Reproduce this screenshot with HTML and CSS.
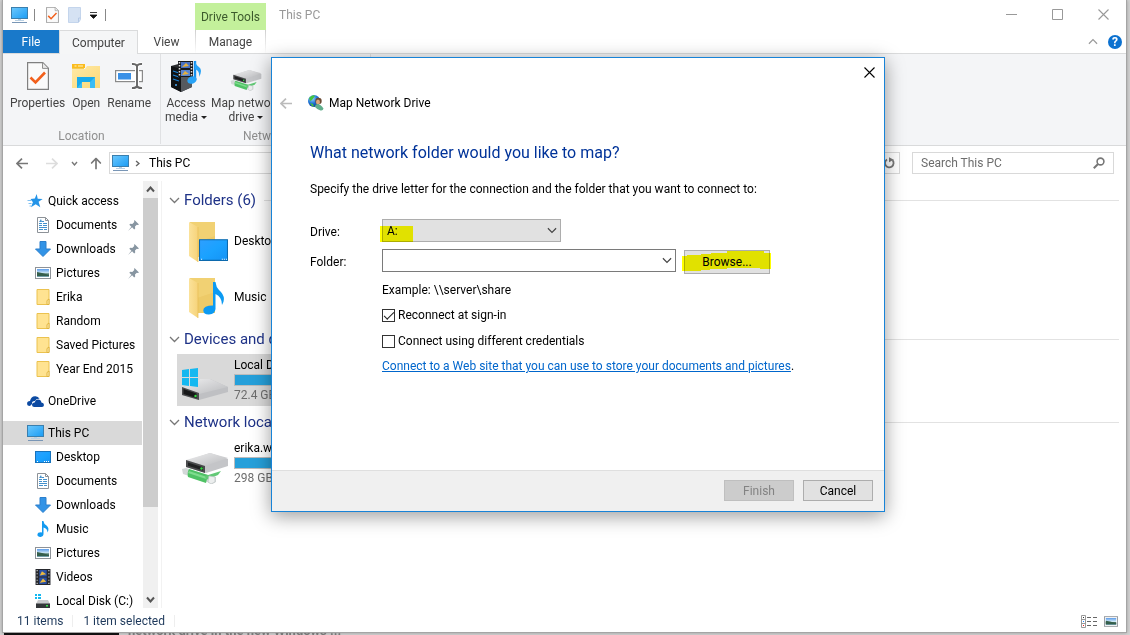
FILE: index.html
```html
<!DOCTYPE html>
<html lang="en">
<head>
<meta charset="utf-8">
<title>This PC</title>
<link rel="stylesheet" href="styles.css">
</head>
<body>
<svg class="sprite" aria-hidden="true">
  <defs>
    <linearGradient id="blue" x1="0" y1="0" x2="1" y2="1"><stop offset="0" stop-color="#6cc8fd"/><stop offset="1" stop-color="#1a9cf4"/></linearGradient>
    <linearGradient id="screen" x1="0" y1="0" x2="1" y2="1"><stop offset="0" stop-color="#2f9fff"/><stop offset=".5" stop-color="#1aa2ff"/><stop offset="1" stop-color="#1493f5"/></linearGradient>
    <linearGradient id="paper" x1="0" y1="0" x2="1" y2="1"><stop offset="0" stop-color="#ffe9a6"/><stop offset="1" stop-color="#fcd978"/></linearGradient>
    <linearGradient id="fold" x1="0" y1="0" x2="1" y2="0"><stop offset="0" stop-color="#fbe29a"/><stop offset="1" stop-color="#f6d37a"/></linearGradient>
    <linearGradient id="metal" x1="0" y1="0" x2="1" y2="1"><stop offset="0" stop-color="#eeeeef"/><stop offset="1" stop-color="#b9babd"/></linearGradient>
    <linearGradient id="sky" x1="0" y1="0" x2="0" y2="1"><stop offset="0" stop-color="#5b9bea"/><stop offset=".5" stop-color="#cfe8f5"/><stop offset=".6" stop-color="#47705f"/><stop offset="1" stop-color="#7ba7b8"/></linearGradient>
    <radialGradient id="ball" cx=".35" cy=".3" r=".8"><stop offset="0" stop-color="#9fd6ff"/><stop offset=".5" stop-color="#1f75d6"/><stop offset="1" stop-color="#0a2c80"/></radialGradient>
  </defs>
  <symbol id="pc" viewBox="0 0 17 16"><rect x=".5" y=".5" width="16" height="11" fill="url(#blue)" stroke="#3a7fae"/><path d="M7 12h3v1H7z" fill="#b8cfe0"/><path d="M4 13.5h9" stroke="#b9d0e3"/><path d="M1 15.5h15" stroke="#7996b6"/></symbol>
  <symbol id="propsheet" viewBox="0 0 22 28"><path d="M.6.6h15.2l5.6 5.6v21.2H.6z" fill="#fafafa" stroke="#808080" stroke-width="1.2"/><path d="M15.5.8v5.6h5.6" fill="#e8e8e8" stroke="#909090"/><path d="M3.500 15.500l5 5 9.500-10" fill="none" stroke="#f2601c" stroke-width="2.600"/></symbol>
  <symbol id="blankdoc" viewBox="0 0 13 16"><path d="M.5.5h12v12l-2 3H.5z" fill="#d5e2f3" stroke="#c4d5ec"/><path d="M10.500 15v-4h2" fill="none" stroke="#b5c9e6"/></symbol>
  <symbol id="openfolder" viewBox="0 0 28 24"><path d="M0 1h12v4h16v19H0z" fill="#f3cb55"/><path d="M0 0h13v4H0z" fill="#fbbc1e"/><path d="M2.500 1.500h2v1h-2zM6 1.500h5v1H6z" fill="#fff3c4"/><path d="M0 5h13l2-3h13v22H0z" fill="url(#paper)"/><path d="M5 24V13h18v11h-5v-6h-8v6z" fill="#3bbcf5"/><path d="M5 13h18l-5 5h-8l-5 6z" fill="#19aaeb"/></symbol>
  <symbol id="rename" viewBox="0 0 28 26"><rect x=".6" y="7.600" width="26.800" height="11" fill="#fff" stroke="#8a8a8a" stroke-width="1.200"/><rect x="3" y="10" width="13" height="6.500" fill="#3a90e6"/><path d="M22 2v22M17 1q4-.5 5 2 1-2.500 5-2M17 25q4 .5 5-2 1 2.500 5 2" fill="none" stroke="#fff" stroke-width="4"/><path d="M22 2v22M17 1q4-.3 5 2 1-2.300 5-2M17 25q4 .3 5-2 1 2.300 5 2" fill="none" stroke="#666" stroke-width="1.900"/></symbol>
  <symbol id="access" viewBox="0 0 32 32"><path d="M1 6l11-3 10 2v22l-11 5-10-5z" fill="#2b2d30"/><path d="M1 6l10 3v23L1 27z" fill="#101214"/><path d="M11 9l11-4v22l-11 5z" fill="#55595e"/><path d="M3 11l6 2M3 15l6 2M3 19l6 2" stroke="#1b82d6" stroke-width="1.200"/><circle cx="6" cy="25" r="1" fill="#48a9f4"/><rect x="8" y="1" width="15" height="16" fill="#17191c"/><path d="M11 2h9v6h-9z" fill="#4a72c4"/><path d="M11 10h9v6h-9z" fill="#5a86d2"/><path d="M12 7l4-4 3 3zM12 15l3-4 4 3z" fill="#e8b13c"/><path d="M9.500 2v15M21.500 2v15" stroke="#dedede" stroke-width="1.500" stroke-dasharray="1.500 1.500"/><path d="M25 1v19" stroke="#1591ef" stroke-width="2.400"/><path d="M25 0q.5 5 4 7 4 3 0 10 1-6-4-8z" fill="#28a3f7"/><ellipse cx="22" cy="20" rx="4.800" ry="3.600" transform="rotate(-20 22 20)" fill="#28a3f7"/></symbol>
  <symbol id="netdrive" viewBox="0 0 48 32"><path d="M1 17l4-1 25 8 5 1v5l-4 2-5-2-24-8z" fill="#d3d8d8"/><path d="M8 17l19 6-2 8-18-6q-1-5 1-8z" fill="#4fc265"/><path d="M8 19l18 6-1 2-18-6z" fill="#7fdc8e"/><path d="M24 24l16-5-3 4-12 5z" fill="#62c976"/><path d="M28 24l6 1v5l-4 2-3-2z" fill="#eceeee" stroke="#bcc3c3" stroke-width=".7"/><path d="M5 9L29 1l18 6v7L25 21 5 15z" fill="#c4c5c8"/><path d="M5 8L29 1l18 5-23 8z" fill="url(#metal)"/><path d="M5 8l19 6v7L5 15z" fill="#4a4b4d"/><path d="M7 10.500l15 4.700v3.300L7 13.700z" fill="#202122"/><circle cx="20.500" cy="16.500" r="1.200" fill="#31dc41"/></symbol>
  <symbol id="windrive" viewBox="0 0 48 34"><path d="M1 21l18-9h10l18 8v5L18 33 1 28z" fill="#bfc0c3"/><path d="M1 21l18-9h10l18 8-29 7z" fill="url(#metal)"/><path d="M1 3l7-1v8H1zM9 2l8-1v9H9zM1 11h7v8l-7-1zM9 11h8v9l-8-1z" fill="#14b8f0"/><path d="M1 20l17 6v7L1 28z" fill="#4a4b4d"/><path d="M2.500 22l13 4.500V31l-13-4z" fill="#171819"/><circle cx="14.500" cy="29" r="1.200" fill="#33df3f"/></symbol>
  <symbol id="smalldrive" viewBox="0 0 16 16"><path d="M0 1h2v2H0zM3 1h3v2H3zM0 4h2v2H0zM3 4h3v2H3z" fill="#14b8f0"/><path d="M3 7h10l2 4H1z" fill="#c9cacd"/><path d="M1 10.500h14V15H1z" fill="#333639"/><path d="M11 12h2v1.500h-2z" fill="#36e14c"/></symbol>
  <symbol id="star" viewBox="0 0 16 14"><path d="M9.200 0l1 4.700 5 .2-4.100 2.800 1.700 5.500-4.600-2.900-4.700 3 1.900-5L3 5l4.300-.4z" fill="#2494e8"/><path d="M0 6.500h4M1 9.500h3M2 12h2" stroke="#80c0f1"/></symbol>
  <symbol id="document" viewBox="0 0 12 16"><path d="M.5.500h8l3 3v12H.5z" fill="#fff" stroke="#8d9298"/><path d="M8.500.5v3h3" fill="none" stroke="#8d9298"/><path d="M2 6.500h3M6 6.500h4M2 8.500h3M6 8.500h4M2 10.500h8M2 12.500h4M7 12.500h3M5 4.500h2" stroke="#4391cc"/><path d="M2 5l2-3 1 3z" fill="#4391cc"/></symbol>
  <symbol id="download" viewBox="0 0 16 16"><path d="M5 .5h6V8h4.500L8 15.500.5 8H5z" fill="#3293e6" stroke="#2b7fcc"/></symbol>
  <symbol id="picture" viewBox="0 0 16 12"><rect x=".5" y=".5" width="15" height="11" fill="#fff" stroke="#8d9298"/><path d="M2 2h12v8H2z" fill="url(#sky)"/><path d="M2 5l5 1 7 2v1H2z" fill="#355f4c"/></symbol>
  <symbol id="folder" viewBox="0 0 13 16"><path d="M.5.5h12v15H.5z" fill="#ffe391" stroke="#ebc24f"/><path d="M12.500 10v5.500h-2v-4z" fill="#fff0b8" stroke="#e0b33e"/></symbol>
  <symbol id="cloud" viewBox="0 0 17 11"><path d="M3 10Q0 10 .1 7.500 0 5.300 3 5 4 .5 8 .3q3-.3 4.600 2.500-3-.8-4.600 2.200Q4.500 5 5 8z" fill="#0c4aa2"/><path d="M7 11q-2.300-.3-2-2.600.2-2 2.600-2Q8.500 3.500 11 3.600q3 .1 3.400 3Q17 7 17 9q-.2 2-2 2z" fill="#0c4aa2"/></symbol>
  <symbol id="desktop" viewBox="0 0 16 12"><rect x=".5" y=".5" width="15" height="11" fill="url(#screen)" stroke="#1673bd"/><path d="M2 10.500h1M9 10.500h1M11 10.500h1M13 10.500h1" stroke="#fff"/></symbol>
  <symbol id="music" viewBox="0 0 12 16"><path d="M5 0h1.400q.4 3 3.100 4.500 3.300 2.500 1 7 0-4-4-5V13q0 2.500-2.900 2.900Q.5 16 .4 13.800.5 11 5 11.400z" fill="#139af0"/></symbol>
  <symbol id="video" viewBox="0 0 14 15"><path d="M0 0h14v15H0z" fill="#26282d"/><path d="M3.500 1h7v6h-7zM3.500 8h7v6h-7z" fill="#2950a4"/><path d="M4 6l2-4 4 3zM4 13l3-4 3 3z" fill="#eab83f"/><path d="M1.500 1v14M12.500 1v14" stroke="#ddd" stroke-dasharray="1 2"/></symbol>
  <symbol id="pin" viewBox="0 0 11 11"><path d="M6.500 0L11 4.500l-1.200.5-1-.2-1.800 1.800.2 2-1 .9-2.100-2.200L0 11l3.400-4.300L1.300 4.700l1-1 2 .2 2-1.800-.2-1z" fill="#8795a1"/></symbol>
  <symbol id="bigfolder" viewBox="0 0 26 40"><path d="M1 0h25v35H8z" fill="#edca68"/><path d="M1 0h25v14L8 20z" fill="#f2d478" opacity=".7"/><path d="M0 0l9 5v35L0 34z" fill="url(#fold)"/><path d="M9 5v35" stroke="#e7bb55" stroke-width=".7"/></symbol>
  <symbol id="chev" viewBox="0 0 11 7"><path d="M1 1l4.500 4.500L10 1" fill="none" stroke="currentColor" stroke-width="1.300"/></symbol>
  <symbol id="chevbold" viewBox="0 0 9 7"><path d="M1 1.500l3.500 4L8 1.500" fill="none" stroke="currentColor" stroke-width="2"/></symbol>
  <symbol id="arrow" viewBox="0 0 12 11"><path d="M12 5.500H1M6 .6L1 5.500l5 4.900" fill="none" stroke="currentColor" stroke-width="1.700"/></symbol>
  <symbol id="cross" viewBox="0 0 11 11"><path d="M.5.5l10 10M10.500.5l-10 10" fill="none" stroke="currentColor" stroke-width="1.100"/></symbol>
  <symbol id="netuser" viewBox="0 0 16 16"><circle cx="6" cy="6" r="6" fill="url(#ball)"/><path d="M1 3q4-4 6-2L4 5l-2 1zM2 8l3 1 1 3-2-1z" fill="#43c33f"/><circle cx="10.500" cy="6" r="3.200" fill="#6b4a33"/><ellipse cx="10" cy="7" rx="2" ry="2.600" fill="#dba77c"/><path d="M7 12q0-3 3-3 3 .5 5.500 4.500-.5 2.500-3 2Q9 14.500 7 12z" fill="#60ae8c"/></symbol>
</svg>

<main class="window">
  <header class="titlebar">
    <div class="quick">
      <svg class="q-pc"><use href="#pc"/></svg><i class="bar"></i>
      <button type="button" aria-label="Properties"><svg class="q-doc"><use href="#propsheet"/></svg></button>
      <button type="button" aria-label="New folder"><svg class="q-doc"><use href="#blankdoc"/></svg></button>
      <button type="button" aria-label="Customize"><svg class="q-more" viewBox="0 0 7 7"><path d="M0 .5h7M0 3h7L3.500 6.500z" fill="#111" stroke="#111" stroke-width=".8"/></svg></button><i class="bar"></i>
    </div>
    <span class="context">Drive Tools</span>
    <h1 class="caption">This PC</h1>
    <div class="controls">
      <button type="button" aria-label="Minimize"><svg viewBox="0 0 11 11"><path d="M0 5.500h11" stroke="currentColor"/></svg></button>
      <button type="button" aria-label="Maximize"><svg viewBox="0 0 11 11"><path d="M.5.5h10v10H.5z" fill="none" stroke="currentColor"/></svg></button>
      <button type="button" aria-label="Close"><svg><use href="#cross"/></svg></button>
    </div>
  </header>

  <nav class="tabs" aria-label="Ribbon tabs">
    <button type="button" class="tab file">File</button>
    <button type="button" class="tab active">Computer</button>
    <button type="button" class="tab view">View</button>
    <button type="button" class="tab manage">Manage</button>
    <span class="tab-end">
      <button type="button" aria-label="Collapse ribbon"><svg class="collapse"><use href="#chev"/></svg></button>
      <button type="button" class="help" aria-label="Help">?</button>
    </span>
  </nav>

  <section class="ribbon">
    <div class="rgroup location">
      <div class="rbuttons">
        <button type="button"><svg class="r-prop"><use href="#propsheet"/></svg><span>Properties</span></button>
        <button type="button"><svg class="r-open"><use href="#openfolder"/></svg><span>Open</span></button>
        <button type="button"><svg class="r-ren"><use href="#rename"/></svg><span>Rename</span></button>
      </div>
      <span class="rname">Location</span>
    </div>
    <div class="rgroup network">
      <div class="rbuttons">
        <button type="button"><svg class="r-acc"><use href="#access"/></svg><span>Access<br>media <b class="tri"></b></span></button>
        <button type="button"><svg class="r-net"><use href="#netdrive"/></svg><span>Map network<br>drive <b class="tri"></b></span></button>
      </div>
      <span class="rname">Network</span>
    </div>
  </section>

  <div class="addressrow">
    <div class="navbuttons">
      <button type="button" aria-label="Back"><svg class="a-arrow"><use href="#arrow"/></svg></button>
      <button type="button" aria-label="Forward" class="off"><svg class="a-arrow flip"><use href="#arrow"/></svg></button>
      <button type="button" aria-label="Recent"><svg class="a-chev"><use href="#chevbold"/></svg></button>
      <button type="button" aria-label="Up"><svg class="a-arrow up"><use href="#arrow"/></svg></button>
    </div>
    <div class="address">
      <svg class="q-pc"><use href="#pc"/></svg>
      <svg class="crumb"><use href="#chevbold"/></svg>
      <span>This PC</span>
      <button type="button" class="refresh" aria-label="Refresh"><svg viewBox="0 0 12 12"><path d="M9.500 3.200A4.300 4.300 0 1 1 4 2.400" fill="none" stroke="currentColor" stroke-width="1.800"/><path d="M6 .2v5l4.800-2.500z" fill="currentColor"/></svg></button>
    </div>
    <div class="search">
      <input type="text" aria-label="Search This PC" placeholder="Search This PC">
      <svg viewBox="0 0 12 12"><circle cx="7.500" cy="4.500" r="3.400" fill="none" stroke="currentColor" stroke-width="1.600"/><path d="M5 7L.8 11.200" stroke="currentColor" stroke-width="2"/></svg>
    </div>
  </div>

  <div class="body">
    <nav class="tree" aria-label="Folders">
      <ul>
        <li class="top"><a href="#"><svg class="i-star"><use href="#star"/></svg>Quick access</a></li>
        <li><a href="#"><svg><use href="#document"/></svg>Documents<svg class="pin"><use href="#pin"/></svg></a></li>
        <li><a href="#"><svg><use href="#download"/></svg>Downloads<svg class="pin"><use href="#pin"/></svg></a></li>
        <li><a href="#"><svg class="flat"><use href="#picture"/></svg>Pictures<svg class="pin"><use href="#pin"/></svg></a></li>
        <li><a href="#"><svg><use href="#folder"/></svg>Erika</a></li>
        <li><a href="#"><svg><use href="#folder"/></svg>Random</a></li>
        <li><a href="#"><svg><use href="#folder"/></svg>Saved Pictures</a></li>
        <li><a href="#"><svg><use href="#folder"/></svg>Year End 2015</a></li>
        <li class="top spaced"><a href="#"><svg class="i-cloud"><use href="#cloud"/></svg>OneDrive</a></li>
        <li class="top spaced"><a href="#" class="selected"><svg class="i-pc"><use href="#pc"/></svg>This PC</a></li>
        <li><a href="#"><svg class="flat"><use href="#desktop"/></svg>Desktop</a></li>
        <li><a href="#"><svg><use href="#document"/></svg>Documents</a></li>
        <li><a href="#"><svg><use href="#download"/></svg>Downloads</a></li>
        <li><a href="#"><svg><use href="#music"/></svg>Music</a></li>
        <li><a href="#"><svg class="flat"><use href="#picture"/></svg>Pictures</a></li>
        <li><a href="#"><svg><use href="#video"/></svg>Videos</a></li>
        <li><a href="#"><svg><use href="#smalldrive"/></svg>Local Disk (C:)</a></li>
      </ul>
    </nav>
    <div class="scrollbar" aria-hidden="true">
      <span class="sb-btn"><svg class="turn"><use href="#chevbold"/></svg></span>
      <span class="thumb"></span><span class="track"></span>
      <span class="sb-btn"><svg><use href="#chevbold"/></svg></span>
    </div>
    <section class="content">
      <div class="group">
        <h2><svg><use href="#chev"/></svg>Folders (6)</h2>
        <div class="tiles">
          <div class="tile"><span class="pic folderpic"><svg class="bf"><use href="#bigfolder"/></svg><svg class="over-desk" viewBox="0 0 28 21"><path d="M.5.5h27v20H.5z" fill="url(#screen)" stroke="#0c69ad"/><path d="M2 19.500h1M22 19.500h1M24 19.500h1M26 19.500h1" stroke="#fff"/></svg></span><span>Desktop</span></div>
          <div class="tile"><span class="pic folderpic"><svg class="bf"><use href="#bigfolder"/></svg><svg class="over-music" viewBox="0 0 22 33"><path d="M11 0h2.500q.5 5 3.500 8 8 7 3 15 0-8-6.500-11v15q-.500 5-6.500 5.500-5.500.200-5.700-4Q1 23.500 11 23.500z" fill="#0c9af2"/></svg></span><span>Music</span></div>
        </div>
      </div>
      <div class="group">
        <h2><svg><use href="#chev"/></svg>Devices and drives (2)</h2>
        <div class="tiles">
          <div class="tile picked"><span class="pic"><svg class="drv"><use href="#windrive"/></svg></span><span class="info"><span>Local Disk (C:)</span><i class="meter"></i><small>72.4 GB free</small></span></div>
        </div>
      </div>
      <div class="group">
        <h2><svg><use href="#chev"/></svg>Network locations (1)</h2>
        <div class="tiles">
          <div class="tile"><span class="pic"><svg class="net"><use href="#netdrive"/></svg></span><span class="info"><span>erika.w</span><i class="meter"></i><small>298 GB free</small></span></div>
        </div>
      </div>
    </section>
  </div>

  <footer class="status">
    <span>11 items</span><span>1 item selected</span>
    <div class="views">
      <button type="button" aria-label="Details"><svg class="v-list" viewBox="0 0 16 13"><path d="M.5.5h4v12h-4zM.5 4.500h4M.5 8.500h4" fill="#fff" stroke="#999"/><path d="M6 2.500h4M12 2.500h4M6 6.500h4M12 6.500h4M6 10.500h4M12 10.500h4" stroke="#666"/><path d="M2 2.500h1" stroke="#333"/><path d="M2 6.500h1" stroke="#28f"/><path d="M2 10.500h1" stroke="#e22"/></svg></button>
      <button type="button" aria-label="Large icons"><svg class="v-pic"><use href="#picture"/></svg></button>
    </div>
  </footer>
</main>

<div class="behind"><i></i><span>network drive in the new Windows ...</span></div>

<form class="dialog" role="dialog" aria-label="Map Network Drive">
  <div class="d-top"><button type="button" aria-label="Close"><svg><use href="#cross"/></svg></button></div>
  <div class="d-title"><button type="button" aria-label="Back"><svg class="d-back"><use href="#arrow"/></svg></button><svg class="d-icon"><use href="#netuser"/></svg><span>Map Network Drive</span></div>
  <div class="d-main">
    <h2>What network folder would you like to map?</h2>
    <p>Specify the drive letter for the connection and the folder that you want to connect to:</p>
    <div class="field">
      <label for="drive">Drive:</label>
      <div class="combo grey"><select id="drive"><option>A:</option></select><svg><use href="#chev"/></svg><i class="mark"></i></div>
    </div>
    <div class="field">
      <label for="folder">Folder:</label>
      <div class="combo"><input id="folder" type="text"><svg><use href="#chev"/></svg></div>
      <div class="browse"><button type="button" class="btn">Browse...</button><svg class="stroke" viewBox="0 0 89 20" preserveAspectRatio="none"><path d="M0 5h5V4h14V3h10V2h16V1h0V0h37v2h7v16H78v-1H45v1H28v1h-9v1H0z" fill="#ff0"/></svg></div>
    </div>
    <div class="extras">
      <span>Example: \\server\share</span>
      <label><input type="checkbox" checked>Reconnect at sign-in</label>
      <label><input type="checkbox">Connect using different credentials</label>
      <span><a href="#">Connect to a Web site that you can use to store your documents and pictures</a>.</span>
    </div>
  </div>
  <div class="d-foot"><button type="submit" class="btn" disabled>Finish</button><button type="button" class="btn">Cancel</button></div>
</form>
</body>
</html>
```
FILE: styles.css
```css
* { box-sizing: border-box; }
html, body { height: 100%; }
body {
  margin: 0;
  padding: 0 3px 0 2px;
  display: flex;
  flex-direction: column;
  background: #d4d4d4;
  font: 12px/16px Roboto, "Open Sans", sans-serif;
  color: #000;
  overflow: hidden;
  position: relative;
}
.sprite { position: absolute; width: 0; height: 0; }
svg { display: block; flex: none; }
button { border: 0; padding: 0; margin: 0; background: none; font: inherit; color: inherit; display: flex; align-items: center; justify-content: center; }
h1, h2, p, ul { margin: 0; padding: 0; font-weight: normal; }
a { color: inherit; text-decoration: none; }

.window { flex: 1; min-height: 0; display: flex; flex-direction: column; background: #fff; border: 1px solid #a5a5a5; border-top: 0; box-shadow: 0 0 4px #999; }

/* title bar */
.titlebar { display: flex; height: 30px; align-items: stretch; color: #999; }
.quick { width: 192px; display: flex; align-items: center; padding-left: 8px; }
.quick .bar { width: 1px; height: 12px; background: #888; margin-left: 6px; }
.quick button { margin-left: 10px; }
.quick .bar + button { margin-left: 11px; }
.quick button + button { margin-left: 9px; }
.q-pc { width: 17px; height: 16px; }
.q-doc { width: 13px; height: 16px; }
.q-more { width: 7px; height: 7px; }
.quick .bar:last-child { margin-left: 8px; }
.context { width: 71px; margin-top: 3px; padding-top: 6px; background: #c3f09b; color: #3c5a2c; text-align: center; white-space: nowrap; }
.caption { font-size: 12px; line-height: 30px; margin-left: 13px; flex: 1; }
.controls { display: flex; }
.controls button { width: 46px; height: 28px; }
.controls svg { width: 11px; height: 11px; }

/* tabs */
.tabs { display: flex; height: 24px; border-bottom: 1px solid #dadbdc; color: #444; }
.tab { height: 23px; }
.file { width: 56px; background: #1979ca; color: #fff; }
.active { width: 79px; height: 24px; background: #f5f6f7; border: 1px solid #dadbdc; border-width: 1px 1px 0; }
.view { width: 57px; }
.manage { width: 71px; border: solid #dadbdc; border-width: 0 1px; border-image: linear-gradient(#ccc, #fff) 1; border-image-width: 0 1px; }
.tab-end { margin-left: auto; display: flex; align-items: center; gap: 10px; padding-right: 4px; color: #999; }
.collapse { width: 10px; height: 7px; transform: rotate(180deg); }
.help { width: 14px; height: 14px; border-radius: 50%; background: #0b71d0; color: #fff; font-weight: bold; line-height: 14px; }

/* ribbon */
.ribbon { display: flex; height: 92px; background: #f4f5f7; border-bottom: 1px solid #d9dadb; color: #444; }
.rgroup { display: flex; flex-direction: column; align-items: center; margin-bottom: 1px; padding-top: 6px; border-right: 1px solid #e0e1e3; }
.rbuttons { display: flex; flex: 1; align-self: stretch; }
.rbuttons button { flex-direction: column; justify-content: flex-start; white-space: nowrap; text-align: center; }
.rbuttons svg { margin-bottom: 2px; }
.rbuttons span { line-height: 14px; margin-top: 2px; }
.rname { color: #8f8f8f; line-height: 16px; }
.location { width: 158px; }
.location .rbuttons { padding-left: 7px; gap: 7px; }
.network { width: 210px; }
.network .rbuttons { padding-left: 4px; gap: 4px; }
.r-prop { width: 22px; height: 32px; }
.r-open { width: 28px; height: 32px; }
.r-ren { width: 28px; height: 32px; }
.r-acc { width: 32px; height: 32px; }
.r-net { width: 32px; height: 32px; padding-top: 8px; }
.tri { display: inline-block; border: 3px solid transparent; border-top-color: #222; border-bottom: 0; vertical-align: middle; }

/* address row */
.addressrow { display: flex; height: 35px; padding: 6px 12px 6px 13px; color: #777; }
.navbuttons { display: flex; width: 93px; align-items: center; gap: 12px; }
.navbuttons .off { color: #ddd; margin: 0 1px 0 6px; }
.a-arrow { width: 12px; height: 11px; }
.flip { transform: rotate(180deg); }
.up { transform: rotate(90deg); }
.a-chev { width: 7px; height: 5px; }
.address { flex: 1; display: flex; align-items: center; border: 1px solid #d9d9d9; padding-left: 2px; color: #000; height: 22px; }
.crumb { width: 7px; height: 5px; margin: 0 8px 0 5px; transform: rotate(-90deg); color: #666; }
.refresh { margin-left: auto; width: 20px; height: 20px; color: #777; }
.refresh svg { width: 12px; height: 12px; }
.search { width: 202px; height: 22px; margin-left: 12px; display: flex; align-items: center; border: 1px solid #d9d9d9; padding: 0 8px; }
.search input { flex: 1; min-width: 0; border: 0; padding: 0; font: inherit; outline: 0; background: none; }
.search input::placeholder { color: #6d6d6d; opacity: 1; }
.search svg { width: 12px; height: 12px; }

/* folder tree */
.body { flex: 1; min-height: 0; display: flex; overflow: hidden; }
.tree { width: 140px; overflow: hidden; padding: 8px 1px 0 0; }
.tree ul { list-style: none; }
.tree a { display: flex; align-items: center; height: 24px; padding-left: 32px; gap: 5px; white-space: nowrap; position: relative; }
.tree svg { width: 16px; height: 16px; }
.tree .flat { height: 12px; }
.tree .top a { padding-left: 24px; gap: 4px; }
.tree .i-star { width: 17px; height: 14px; }
.tree .i-cloud { width: 17px; height: 11px; }
.tree .i-pc { width: 17px; }
.tree .spaced { margin-top: 8px; }
.tree .selected { background: #d9d9d9; }
.tree .pin { width: 11px; height: 11px; margin-left: auto; margin-right: 3px; }
.scrollbar { width: 15px; display: flex; flex-direction: column; background: #f0f0f0; color: #555; }
.sb-btn { height: 17px; display: flex; align-items: center; justify-content: center; }
.sb-btn svg { width: 9px; height: 7px; }
.turn { transform: rotate(180deg); }
.thumb { flex: 310; background: #cdcdcd; }
.track { flex: 84; }

/* content */
.content { flex: 1; min-width: 0; margin-left: 3px; border-left: 1px solid #f2f2f2; padding: 6px 7px 0 7px; display: flex; flex-direction: column; gap: 3px; }
.group h2 { display: flex; align-items: center; height: 26px; margin-bottom: 2px; gap: 4px; font-size: 15px; color: #1e3287; white-space: nowrap; }
.group h2::after { content: ""; flex: 1; height: 1px; margin-left: 4px; background: #e2e2e2; }
.group h2 svg { width: 11px; height: 7px; color: #777; }
.tiles { display: flex; flex-direction: column; gap: 4px; padding-left: 8px; }
.tile { width: 254px; height: 52px; display: flex; align-items: center; gap: 5px; padding-left: 4px; }
.picked { background: #d9d9d9; }
.pic { width: 48px; height: 48px; flex: none; position: relative; display: flex; align-items: center; justify-content: center; }
.bf { width: 26px; height: 40px; margin: 2px 6px 0 0; }
.over-desk { position: absolute; left: 18px; top: 22px; width: 29px; height: 22px; }
.over-music { position: absolute; left: 21px; top: 9px; width: 22px; height: 33px; }
.drv { width: 48px; height: 34px; margin-top: 8px; }
.net { width: 48px; height: 32px; margin-top: 10px; }
.info { display: flex; flex-direction: column; width: 180px; padding-bottom: 1px; }
.meter { height: 12px; border: 1px solid #bcbcbc; background: linear-gradient(90deg, #26a0da 70%, #e6e6e6 70%); margin-top: 1px; }
.info small { font-size: 12px; color: #6d6d6d; margin-top: 1px; }

/* status bar */
.status { height: 24px; display: flex; align-items: center; color: #1e395b; padding: 2px 8px 0 14px; }
.status > span { padding-right: 9px; margin-right: 10px; border-right: 1px solid #eee; line-height: 12px; }
.views { margin-left: auto; display: flex; gap: 7px; align-items: center; }
.v-list { width: 16px; height: 13px; }
.v-pic { width: 14px; height: 11px; }

/* page behind the window */
.behind { height: 2px; display: flex; align-items: flex-end; gap: 9px; overflow: hidden; padding-left: 2px; font-size: 13px; line-height: 8px; font-weight: bold; color: #777; }
.behind i { width: 115px; height: 2px; background: #111; }

/* dialog */
.dialog { position: absolute; left: 271px; top: 57px; width: 614px; display: flex; flex-direction: column; background: #fff; border: 1px solid #1883d7; box-shadow: 0 4px 18px rgba(0, 0, 0, .4); }
.d-top { display: flex; justify-content: flex-end; height: 32px; }
.d-top button { width: 30px; height: 28px; }
.d-top svg { width: 11px; height: 11px; }
.d-title { display: flex; align-items: center; height: 26px; padding-left: 8px; gap: 5px; }
.d-title button { margin-right: 11px; color: #bbb; }
.d-back { width: 12px; height: 11px; }
.d-icon { width: 16px; height: 16px; }
.d-main { padding: 25px 20px 95px 38px; }
.d-main h2 { font-size: 16px; line-height: 24px; color: #039; }
.d-main p { margin: 15px 0 21px; line-height: 18px; white-space: nowrap; }
.field { display: flex; align-items: center; height: 23px; margin-bottom: 7px; }
.field label { width: 72px; padding-top: 2px; }
.combo { width: 294px; height: 23px; border: 1px solid #7a7a7a; position: relative; display: flex; align-items: center; background: #fff; }
.combo.grey { width: 179px; background: #e1e1e1; border-color: #adadad; }
.combo select, .combo input { appearance: none; flex: 1; min-width: 0; height: 21px; border: 0; padding: 0 4px; background: none; font: inherit; color: inherit; outline: 0; }
.combo svg { width: 10px; height: 7px; color: #444; margin-right: 3px; }
.mark { position: absolute; left: -3px; top: 6px; width: 33px; height: 16px; background: #ff0; mix-blend-mode: multiply; }
.browse { position: relative; margin: 2px 0 0 8px; }
.btn { width: 70px; height: 21px; background: #e1e1e1; border: 1px solid #adadad; }
.btn:disabled { background: #ccc; border-color: #bfbfbf; color: #838383; }
.browse .btn { width: 86px; height: 24px; }
.stroke { position: absolute; left: -2px; top: 1px; width: 89px; height: 20px; mix-blend-mode: multiply; }
.extras { display: flex; flex-direction: column; gap: 8px; padding: 3px 0 0 72px; line-height: 17px; }
.extras label { display: flex; align-items: center; gap: 3px; }
.extras label + label { margin-top: 1px; }
.extras input { appearance: none; margin: 0; width: 13px; height: 13px; border: 1px solid #333; background: #fff; }
.extras input:checked::after { content: ""; display: block; width: 9px; height: 4px; margin: 2px 1px; border: solid #222; border-width: 0 0 1px 1px; transform: rotate(-45deg); }
.extras a { color: #0066cc; text-decoration: underline; }
.d-foot { display: flex; justify-content: flex-end; gap: 9px; padding: 9px 11px 10px; background: #f0f0f0; border-top: 1px solid #dfdfdf; }
```
